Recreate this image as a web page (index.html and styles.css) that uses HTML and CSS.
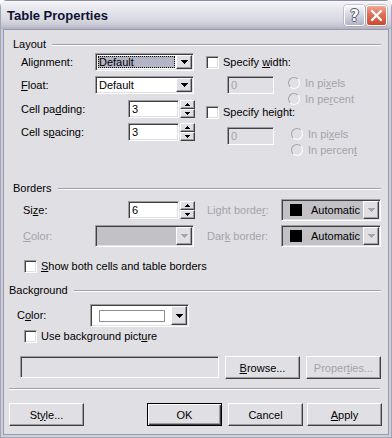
FILE: index.html
```html
<!DOCTYPE html>
<html lang="en">
  <head>
    <meta charset="UTF-8" />
    <title>Table Properties</title>
    <link rel="stylesheet" href="styles.css">
  </head>
  <body>
    <div class="window">
      <!-- Title bar -->
      <div class="titlebar">
        <span class="title">Table Properties</span>
        <div class="caption-btns">
          <span class="cbtn help">?</span>
          <span class="cbtn close">
            <svg width="21" height="21" viewBox="0 0 21 21"><path d="M6 6L15 15M15 6L6 15" stroke="#fff" stroke-width="2.4" stroke-linecap="round"/></svg>
          </span>
        </div>
      </div>

      <div class="frame">
        <div class="client">
          <!-- Layout -->
          <div class="group-head head-layout"><span>Layout</span><i class="rule"></i></div>
          <div class="layout">
            <div class="layout-left">
              <div class="row">
                <span class="lbl w74">Alignment:</span>
                <div class="combo field w99 h18">
                  <span class="combo-text"><span class="sel">Default</span></span>
                  <span class="drop raised"><svg width="7" height="4"><path d="M0 0H7V1H6V2H5V3H4V4H3V3H2V2H1V1H0Z"/></svg></span>
                </div>
              </div>
              <div class="row mt5">
                <span class="lbl w74"><u>F</u>loat:</span>
                <div class="combo field w99 h18">
                  <span class="combo-text pad3">Default</span>
                  <span class="drop raised"><svg width="7" height="4"><path d="M0 0H7V1H6V2H5V3H4V4H3V3H2V2H1V1H0Z"/></svg></span>
                </div>
              </div>
              <div class="row mt6">
                <span class="lbl w107">Cell pa<u>d</u>ding:</span>
                <div class="spin">
                  <span class="field num">3</span>
                  <span class="spin-btns">
                    <span class="raised"><svg width="5" height="3"><path d="M0 3H5V2H4V1H3V0H2V1H1V2H0Z"/></svg></span>
                    <span class="raised"><svg width="5" height="3"><path d="M0 0H5V1H4V2H3V3H2V2H1V1H0Z"/></svg></span>
                  </span>
                </div>
              </div>
              <div class="row mt5">
                <span class="lbl w107">Cell s<u>p</u>acing:</span>
                <div class="spin">
                  <span class="field num">3</span>
                  <span class="spin-btns">
                    <span class="raised"><svg width="5" height="3"><path d="M0 3H5V2H4V1H3V0H2V1H1V2H0Z"/></svg></span>
                    <span class="raised"><svg width="5" height="3"><path d="M0 0H5V1H4V2H3V3H2V2H1V1H0Z"/></svg></span>
                  </span>
                </div>
              </div>
            </div>

            <div class="layout-right">
              <div class="check-row mt1"><span class="check"></span><span>Specify <u>w</u>idth:</span></div>
              <div class="sub mt6">
                <span class="field num off w47">0</span>
                <div class="radios">
                  <div class="radio-row off"><span class="radio"></span><span>In pi<u>x</u>els</span></div>
                  <div class="radio-row off"><span class="radio"></span><span>In pe<u>r</u>cent</span></div>
                </div>
              </div>
              <div class="check-row"><span class="check"></span><span>Specify hei<u>g</u>ht:</span></div>
              <div class="sub mt7">
                <span class="field num off w47">0</span>
                <div class="radios shift">
                  <div class="radio-row off"><span class="radio"></span><span>In pi<u>x</u>els</span></div>
                  <div class="radio-row off"><span class="radio"></span><span>In percen<u>t</u></span></div>
                </div>
              </div>
            </div>
          </div>

          <!-- Borders -->
          <div class="group-head head-borders"><span>Borders</span><i class="rule"></i></div>
          <div class="borders">
            <div class="brow">
              <span class="lbl w105">Si<u>z</u>e:</span>
              <div class="spin">
                <span class="field num">6</span>
                <span class="spin-btns">
                  <span class="raised"><svg width="5" height="3"><path d="M0 3H5V2H4V1H3V0H2V1H1V2H0Z"/></svg></span>
                  <span class="raised"><svg width="5" height="3"><path d="M0 0H5V1H4V2H3V3H2V2H1V1H0Z"/></svg></span>
                </span>
              </div>
              <span class="lbl w74 off ml12">Light borde<u>r</u>:</span>
              <div class="combo field w100 h22 grey">
                <span class="combo-text swatch-text"><i class="chip"></i><span>Automatic</span></span>
                <span class="drop raised dim"><svg width="7" height="4"><path d="M0 0H7V1H6V2H5V3H4V4H3V3H2V2H1V1H0Z"/></svg></span>
              </div>
            </div>
            <div class="brow mt4">
              <span class="lbl w72 off"><u>C</u>olor:</span>
              <div class="combo field w99 h22 grey">
                <span class="combo-text"></span>
                <span class="drop raised dim"><svg width="7" height="4"><path d="M0 0H7V1H6V2H5V3H4V4H3V3H2V2H1V1H0Z"/></svg></span>
              </div>
              <span class="lbl w74 off ml13">Dar<u>k</u> border:</span>
              <div class="combo field w100 h22 grey">
                <span class="combo-text swatch-text"><i class="chip"></i><span>Automatic</span></span>
                <span class="drop raised dim"><svg width="7" height="4"><path d="M0 0H7V1H6V2H5V3H4V4H3V3H2V2H1V1H0Z"/></svg></span>
              </div>
            </div>
            <div class="check-row both"><span class="check"></span><span><u>S</u>how both cells and table borders</span></div>
          </div>

          <!-- Background -->
          <div class="group-head head-bg"><span>Background</span><i class="rule"></i></div>
          <div class="bg-color">
            <span class="lbl w73">C<u>o</u>lor:</span>
            <div class="combo field w99 h23">
              <span class="combo-text"><i class="blank"></i></span>
              <span class="drop raised"><svg width="7" height="4"><path d="M0 0H7V1H6V2H5V3H4V4H3V3H2V2H1V1H0Z"/></svg></span>
            </div>
          </div>
          <div class="check-row bg-check"><span class="check"></span><span>Use background pict<u>u</u>re</span></div>
          <div class="browse-row">
            <span class="field path off"></span>
            <span class="btn raised"><span><u>B</u>rowse...</span></span>
            <span class="btn raised off"><span>Proper<u>t</u>ies...</span></span>
          </div>

          <div class="separator"></div>

          <div class="button-row">
            <span class="btn raised"><span>St<u>y</u>le...</span></span>
            <span class="btn default ok">OK</span>
            <span class="btn raised cancel">Cancel</span>
            <span class="btn raised apply"><span><u>A</u>pply</span></span>
          </div>
        </div>
      </div>
    </div>
  </body>
</html>
```

FILE: styles.css
```css
/* Global */
* {
  box-sizing: border-box;
}

body {
  margin: 0;
  background: #fff;
  font-family: "Liberation Sans", Arial, sans-serif;
  font-size: 11px;
  color: #000;
}

u {
  text-underline-offset: 1px;
}

/* Window frame */
.window {
  width: 392px;
  height: 438px;
  display: flex;
  flex-direction: column;
  border-radius: 7px 7px 0 0;
  overflow: hidden;
  background: #cfcfdb;
}

.titlebar {
  height: 29px;
  display: flex;
  align-items: flex-start;
  background: linear-gradient(#fdfdfe 0, #eeeef3 4px, #e3e3ea 12px, #d8d8e1 20px, #c6c6d2 26px, #aeaebf 29px);
  box-shadow: inset 0 1px #8c8ca2, inset 1px 0 #a4a4b8, inset -1px 0 #a4a4b8;
}

.title {
  padding: 8px 0 0 7px;
  font-size: 13px;
  font-weight: bold;
  color: #0f1133;
}

.caption-btns {
  margin: 5px 5px 0 auto;
  display: flex;
  gap: 1px;
}

.cbtn {
  width: 21px;
  height: 21px;
  border: 1px solid #fff;
  border-radius: 3px;
  display: flex;
  align-items: center;
  justify-content: center;
  box-shadow: 0 0 0 0.5px #9a9aac;
}

.help {
  background: linear-gradient(#f6f6fa, #d8d8e4 45%, #b2b2c6);
  color: #fff;
  font: bold 15px "DejaVu Sans", sans-serif;
  text-shadow: 1px 0 #55556c, -1px 0 #55556c, 0 1px #55556c, 0 -1px #55556c;
}

.close {
  background: linear-gradient(#f2a896, #e2735a 40%, #cc4a30);
}

.close svg {
  margin: -1px;
}

.frame {
  flex: 1;
  display: flex;
  padding: 0 3px 3px;
  background: #cfcfdb;
  box-shadow: inset 1px 0 #a4a4b8, inset -1px 0 #a4a4b8, inset 0 -1px #a4a4b8;
}

.client {
  flex: 1;
  display: flex;
  flex-direction: column;
  border: 1px solid #9a9aae;
  background: #e0dfe3;
}

/* Group headings */
.group-head {
  display: flex;
  align-items: center;
  height: 13px;
  line-height: 13px;
  padding-right: 7px;
}

.rule {
  flex: 1;
  height: 2px;
  margin-left: 6px;
  border-top: 1px solid #a2a1a8;
  border-bottom: 1px solid #fff;
}

.head-layout {
  margin-top: 8px;
  padding-left: 9px;
}

.head-borders {
  margin-top: 27px;
  padding-left: 9px;
}

.head-bg {
  margin-top: 10px;
  padding-left: 5px;
}

/* Common controls */
.lbl {
  flex: none;
  line-height: 13px;
}

.w72 { width: 72px; }
.w73 { width: 73px; }
.w74 { width: 74px; }
.w105 { width: 105px; }
.w107 { width: 107px; }
.w47 { width: 47px; }
.w99 { width: 99px; }
.w100 { width: 100px; }
.h18 { height: 18px; }
.h22 { height: 22px; }
.h23 { height: 23px; }
.mt1 { margin-top: 1px; }
.mt4 { margin-top: 4px; }
.mt5 { margin-top: 5px; }
.mt6 { margin-top: 6px; }
.mt7 { margin-top: 7px; }
.ml12 { margin-left: 12px; }
.ml13 { margin-left: 13px; }

.off {
  color: #a5a4a9;
}

.field {
  background: #fff;
  border: 1px solid;
  border-color: #9d9da1 #fff #fff #9d9da1;
  box-shadow: inset 1px 1px #404040, inset -1px -1px #e0dfe3;
}

.field.off,
.field.grey {
  background: #e0dfe3;
}

.combo.grey {
  background: #c2c1c6;
}

.raised {
  background: #e0dfe3;
  border: 1px solid;
  border-color: #fff #404040 #404040 #fff;
  box-shadow: inset -1px -1px #9d9da1;
}

.combo {
  flex: none;
  display: flex;
  padding: 1px;
}

.combo-text {
  flex: 1;
  display: flex;
  align-items: center;
  overflow: hidden;
}

.pad3 {
  padding-left: 2px;
}

.sel {
  flex: 1;
  align-self: stretch;
  margin: 1px;
  padding-left: 1px;
  display: flex;
  align-items: center;
  background: #b3b5c7;
  outline: 1px dotted #000;
  outline-offset: -1px;
}

.drop {
  width: 16px;
  display: flex;
  align-items: center;
  justify-content: center;
}

.drop.dim {
  background: #e0dfe3;
}

.drop.dim path {
  fill: #a5a4a9;
}

.spin {
  flex: none;
  display: flex;
}

.num {
  width: 51px;
  height: 18px;
  padding-left: 3px;
  line-height: 16px;
}

.spin-btns {
  margin-left: 1px;
  width: 15px;
  height: 18px;
  display: flex;
  flex-direction: column;
}

.spin-btns .raised {
  height: 9px;
  display: flex;
  align-items: center;
  justify-content: center;
}

.check {
  flex: none;
  width: 13px;
  height: 13px;
  margin-right: 4px;
  background: #fff;
  border: 1px solid;
  border-color: #9d9da1 #fff #fff #9d9da1;
  box-shadow: inset 1px 1px #404040, inset -1px -1px #e0dfe3;
}

.check-row {
  display: flex;
  align-items: center;
  height: 16px;
}

.radio {
  flex: none;
  width: 12px;
  height: 12px;
  margin-right: 5px;
  border-radius: 50%;
  border: 1px solid;
  border-color: #a5a4a9 #fff #fff #a5a4a9;
  background: #e0dfe3;
}

.radio-row {
  display: flex;
  align-items: center;
  height: 16px;
}

/* Layout group */
.layout {
  display: flex;
  margin-top: 2px;
  padding-left: 17px;
}

.layout-left {
  width: 174px;
  display: flex;
  flex-direction: column;
}

.row {
  display: flex;
  align-items: center;
  height: 18px;
}

.layout-right {
  margin-left: 11px;
  display: flex;
  flex-direction: column;
}

.sub {
  display: flex;
  align-items: flex-start;
  height: 28px;
}

.sub .num {
  margin-left: 21px;
  width: 47px;
}

.radios {
  margin: -1px 0 0 14px;
}

.radios.shift {
  margin-left: 17px;
}

/* Borders group */
.borders {
  margin-top: 4px;
  padding-left: 19px;
}

.brow {
  display: flex;
  align-items: center;
  height: 22px;
}

.swatch-text {
  padding-left: 7px;
  gap: 9px;
}

.chip {
  width: 12px;
  height: 12px;
  background: #000;
}

.both {
  margin-top: 11px;
  padding-left: 1px;
}

/* Background group */
.bg-color {
  display: flex;
  align-items: center;
  margin-top: 7px;
  padding-left: 13px;
  height: 23px;
}

.blank {
  margin-left: 7px;
  width: 66px;
  height: 12px;
  background: #fff;
  border: 1px solid #8e8e92;
}

.bg-check {
  margin-top: 1px;
  padding-left: 20px;
}

.browse-row {
  display: flex;
  align-items: flex-start;
  margin-top: 12px;
  padding-left: 16px;
}

.path {
  width: 199px;
  height: 22px;
}

.btn {
  flex: none;
  width: 75px;
  height: 23px;
  display: flex;
  align-items: center;
  justify-content: center;
  margin-left: 6px;
}

.separator {
  margin: 9px 0 0 5px;
  width: 371px;
  height: 2px;
  border-top: 1px solid #a2a1a8;
  border-bottom: 1px solid #fff;
}

.button-row {
  display: flex;
  margin-top: 13px;
  padding-left: 5px;
}

.button-row .btn:first-child {
  margin-left: 0;
}

.btn.default {
  background: #e0dfe3;
  border: 1px solid #000;
  box-shadow: inset 1px 1px #fff, inset -1px -1px #404040, inset -2px -2px #9d9da1;
}

.ok {
  margin-left: 63px;
}

.apply {
  margin-left: 4px;
}
```
